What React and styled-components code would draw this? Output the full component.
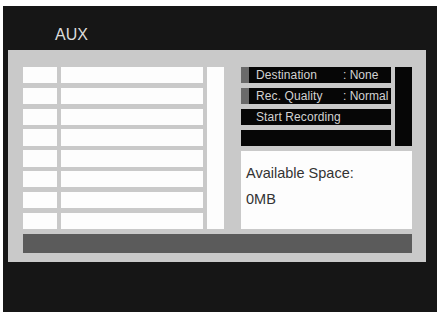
import React from "react";
import styled, { createGlobalStyle } from "styled-components";

const Global = createGlobalStyle`
  html, body { margin: 0; padding: 0; background: #ffffff; }
  body { font-family: "Liberation Sans", Arial, sans-serif; }
  #root { width: 437px; height: 312px; overflow: hidden; }
`;

const Screen = styled.div`
  margin: 6px 0 0 3px;
  width: 434px;
  height: 306px;
  background: #161616;
  padding-top: 20px;
  box-sizing: border-box;
`;

const Title = styled.div`
  margin-left: 52px;
  height: 18px;
  line-height: 18px;
  font-size: 16px;
  color: #dcdcdc;
`;

const Panel = styled.div`
  margin: 6px 0 0 5px;
  width: 418px;
  height: 212px;
  box-sizing: border-box;
  background: #c9c9c9;
  padding: 17px 14px 9px 15px;
  display: flex;
  flex-direction: column;
  gap: 5px;
`;

const Top = styled.div`
  height: 162px;
  display: flex;
`;

const Table = styled.div`
  display: grid;
  grid-template-columns: 34px 142px;
  grid-template-rows: repeat(8, 1fr);
  column-gap: 4px;
  row-gap: 4.5px;
`;

const Cell = styled.div`
  background: #fdfdfd;
`;

const ScrollTrack = styled.div`
  width: 17px;
  margin-left: 4px;
  background: #fdfdfd;
`;

const Right = styled.div`
  margin-left: 17px;
  width: 171px;
  display: flex;
  flex-direction: column;
  gap: 5px;
`;

const MenuArea = styled.div`
  display: flex;
  gap: 4px;
  height: 79px;
`;

const Menu = styled.div`
  width: 150px;
  display: flex;
  flex-direction: column;
  gap: 5px;
`;

const Item = styled.div`
  height: 16px;
  background: #060606;
  display: flex;
  align-items: center;
  font-size: 12px;
  color: #d2d2d2;
  white-space: nowrap;
  border-left: 8px solid ${(p) => (p.$mark ? "#6a6a6a" : "#060606")};
  box-sizing: border-box;
`;

const Label = styled.span`
  margin-left: 7px;
  width: 87px;
  letter-spacing: 0.1px;
`;

const Value = styled.span``;

const MenuScroll = styled.div`
  width: 17px;
  background: #060606;
`;

const Info = styled.div`
  flex: 1;
  background: #fdfdfd;
  padding: 14px 0 0 5px;
  color: #333333;
  font-size: 14.5px;
  line-height: 16px;
`;

const InfoLine = styled.div`
  margin-bottom: ${(p) => p.$gap || 0}px;
`;

const Bar = styled.div`
  height: 19px;
  background: #5b5b5b;
`;

const rows = Array.from({ length: 8 });

export default function App() {
  return (
    <>
      <Global />
      <Screen>
        <Title>AUX</Title>
        <Panel>
          <Top>
            <Table>
              {rows.map((_, i) => (
                <React.Fragment key={i}>
                  <Cell />
                  <Cell />
                </React.Fragment>
              ))}
            </Table>
            <ScrollTrack />
            <Right>
              <MenuArea>
                <Menu>
                  <Item $mark>
                    <Label>Destination</Label>
                    <Value>: None</Value>
                  </Item>
                  <Item $mark>
                    <Label>Rec. Quality</Label>
                    <Value>: Normal</Value>
                  </Item>
                  <Item>
                    <Label>Start Recording</Label>
                  </Item>
                  <Item />
                </Menu>
                <MenuScroll />
              </MenuArea>
              <Info>
                <InfoLine $gap={10}>Available Space:</InfoLine>
                <InfoLine>0MB</InfoLine>
              </Info>
            </Right>
          </Top>
          <Bar />
        </Panel>
      </Screen>
    </>
  );
}
